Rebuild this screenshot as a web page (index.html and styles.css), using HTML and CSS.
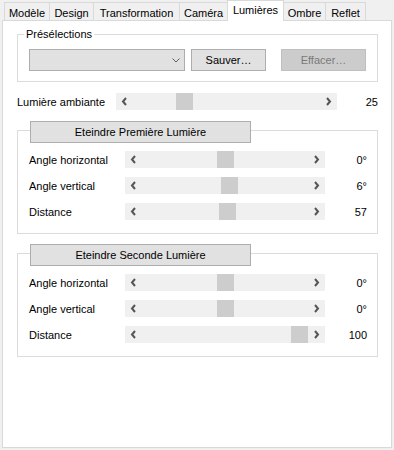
FILE: index.html
```html
<!DOCTYPE html>
<html lang="fr">
<head>
    <meta charset="UTF-8">
    <title>Lumières</title>
    <link rel="stylesheet" href="styles.css">
</head>
<body>
    <div class="window">
        <div class="tabs">
            <div class="tab tab-modele">Modèle</div>
            <div class="tab tab-design">Design</div>
            <div class="tab tab-transfo">Transformation</div>
            <div class="tab tab-camera">Caméra</div>
            <div class="tab tab-lumieres active">Lumières</div>
            <div class="tab tab-ombre">Ombre</div>
            <div class="tab tab-reflet">Reflet</div>
        </div>

        <div class="panel">
            <fieldset class="presets">
                <legend>Présélections</legend>
                <div class="preset-row">
                    <div class="combo">
                        <svg width="8" height="5" viewBox="0 0 8 5"><polyline points="0.5,0.5 4,4 7.5,0.5" fill="none" stroke="#606060" stroke-width="1"/></svg>
                    </div>
                    <button class="btn btn-save">Sauver…</button>
                    <button class="btn btn-clear" disabled>Effacer…</button>
                </div>
            </fieldset>

            <div class="row ambient">
                <span class="label">Lumière ambiante</span>
                <div class="scrollbar">
                    <span class="arrow"><svg width="17" height="17" viewBox="0 0 17 17"><polyline points="10,5 7,8.5 10,12" fill="none" stroke="#555" stroke-width="2"/></svg></span>
                    <div class="track"><div class="thumb" style="--pos: 0.25"></div></div>
                    <span class="arrow"><svg width="17" height="17" viewBox="0 0 17 17"><polyline points="7,5 10,8.5 7,12" fill="none" stroke="#555" stroke-width="2"/></svg></span>
                </div>
                <span class="value">25</span>
            </div>

            <!-- premiere lumiere -->
            <div class="light first">
                <button class="btn btn-toggle">Eteindre Première Lumière</button>
                <div class="row">
                    <span class="label">Angle horizontal</span>
                    <div class="scrollbar">
                        <span class="arrow"><svg width="17" height="17" viewBox="0 0 17 17"><polyline points="10,5 7,8.5 10,12" fill="none" stroke="#555" stroke-width="2"/></svg></span>
                        <div class="track"><div class="thumb" style="--pos: 0.5"></div></div>
                        <span class="arrow"><svg width="17" height="17" viewBox="0 0 17 17"><polyline points="7,5 10,8.5 7,12" fill="none" stroke="#555" stroke-width="2"/></svg></span>
                    </div>
                    <span class="value">0°</span>
                </div>
                <div class="row">
                    <span class="label">Angle vertical</span>
                    <div class="scrollbar">
                        <span class="arrow"><svg width="17" height="17" viewBox="0 0 17 17"><polyline points="10,5 7,8.5 10,12" fill="none" stroke="#555" stroke-width="2"/></svg></span>
                        <div class="track"><div class="thumb" style="--pos: 0.533"></div></div>
                        <span class="arrow"><svg width="17" height="17" viewBox="0 0 17 17"><polyline points="7,5 10,8.5 7,12" fill="none" stroke="#555" stroke-width="2"/></svg></span>
                    </div>
                    <span class="value">6°</span>
                </div>
                <div class="row">
                    <span class="label">Distance</span>
                    <div class="scrollbar">
                        <span class="arrow"><svg width="17" height="17" viewBox="0 0 17 17"><polyline points="10,5 7,8.5 10,12" fill="none" stroke="#555" stroke-width="2"/></svg></span>
                        <div class="track"><div class="thumb" style="--pos: 0.517"></div></div>
                        <span class="arrow"><svg width="17" height="17" viewBox="0 0 17 17"><polyline points="7,5 10,8.5 7,12" fill="none" stroke="#555" stroke-width="2"/></svg></span>
                    </div>
                    <span class="value">57</span>
                </div>
            </div>

            <!-- seconde lumiere -->
            <div class="light second">
                <button class="btn btn-toggle">Eteindre Seconde Lumière</button>
                <div class="row">
                    <span class="label">Angle horizontal</span>
                    <div class="scrollbar">
                        <span class="arrow"><svg width="17" height="17" viewBox="0 0 17 17"><polyline points="10,5 7,8.5 10,12" fill="none" stroke="#555" stroke-width="2"/></svg></span>
                        <div class="track"><div class="thumb" style="--pos: 0.5"></div></div>
                        <span class="arrow"><svg width="17" height="17" viewBox="0 0 17 17"><polyline points="7,5 10,8.5 7,12" fill="none" stroke="#555" stroke-width="2"/></svg></span>
                    </div>
                    <span class="value">0°</span>
                </div>
                <div class="row">
                    <span class="label">Angle vertical</span>
                    <div class="scrollbar">
                        <span class="arrow"><svg width="17" height="17" viewBox="0 0 17 17"><polyline points="10,5 7,8.5 10,12" fill="none" stroke="#555" stroke-width="2"/></svg></span>
                        <div class="track"><div class="thumb" style="--pos: 0.5"></div></div>
                        <span class="arrow"><svg width="17" height="17" viewBox="0 0 17 17"><polyline points="7,5 10,8.5 7,12" fill="none" stroke="#555" stroke-width="2"/></svg></span>
                    </div>
                    <span class="value">0°</span>
                </div>
                <div class="row">
                    <span class="label">Distance</span>
                    <div class="scrollbar">
                        <span class="arrow"><svg width="17" height="17" viewBox="0 0 17 17"><polyline points="10,5 7,8.5 10,12" fill="none" stroke="#555" stroke-width="2"/></svg></span>
                        <div class="track"><div class="thumb" style="--pos: 1"></div></div>
                        <span class="arrow"><svg width="17" height="17" viewBox="0 0 17 17"><polyline points="7,5 10,8.5 7,12" fill="none" stroke="#555" stroke-width="2"/></svg></span>
                    </div>
                    <span class="value">100</span>
                </div>
            </div>
        </div>
    </div>
</body>
</html>
```

FILE: styles.css
```css
* {
    box-sizing: border-box;
}

body {
    margin: 0;
    background-color: #f0f0f0;
    font-family: "Liberation Sans", Arial, sans-serif;
    font-size: 11px;
    color: #000;
}

.window {
    width: 394px;
    height: 450px;
    padding: 0 2px;
}

/* onglets */
.tabs {
    display: flex;
    align-items: flex-end;
    height: 20px;
    padding-left: 2px;
}

.tab {
    height: 18px;
    margin-left: -1px;
    padding-top: 3px;
    border: 1px solid #d9d9d9;
    border-bottom: none;
    background-color: #f0f0f0;
    text-align: center;
    line-height: 14px;
    white-space: nowrap;
}

.tab:first-child {
    margin-left: 0;
}

.tab.active {
    height: 21px;
    margin-bottom: -1px;
    padding-top: 2px;
    background-color: #fff;
    position: relative;
    z-index: 1;
}

.tab-modele { width: 46px; }
.tab-design { width: 45px; }
.tab-transfo { width: 87px; }
.tab-camera { width: 49px; }
.tab-lumieres { width: 57px; }
.tab-ombre { width: 43px; }
.tab-reflet { width: 41px; }

.panel {
    height: 428px;
    border: 1px solid #d9d9d9;
    background-color: #fff;
    padding: 6px 13px 0 14px;
}

/* groupes */
.presets {
    margin: 0;
    min-width: 0;
    border: 1px solid #dcdcdc;
    padding: 8px 11px 10px 11px;
}

.presets legend {
    margin-left: -5px;
    padding: 0 2px;
    line-height: 14px;
}

.preset-row {
    display: flex;
    align-items: center;
}

.combo {
    width: 156px;
    height: 22px;
    display: flex;
    align-items: center;
    justify-content: flex-end;
    padding-right: 4px;
    background-color: #e1e1e1;
    border: 1px solid #adadad;
}

.btn {
    height: 22px;
    padding: 0;
    font-family: inherit;
    font-size: 11px;
    color: #000;
    background-color: #e1e1e1;
    border: 1px solid #adadad;
    border-radius: 0;
}

.btn-save {
    width: 75px;
    margin-left: 6px;
}

.btn-clear {
    width: 85px;
    margin-left: 15px;
    background-color: #cccccc;
    border-color: #bfbfbf;
    color: #7a7a7a;
}

/* le bouton se pose sur la bordure du haut */
.light {
    margin-top: 20px;
    padding: 0 10px 13px 11px;
    border: 1px solid #dcdcdc;
}

.light.second {
    margin-top: 19px;
}

.btn-toggle {
    display: block;
    width: 221px;
    margin: -10px 0 8px 1px;
}

/* lignes avec barre de defilement */
.row {
    display: flex;
    align-items: center;
    height: 17px;
}

.row + .row {
    margin-top: 9px;
}

.label {
    width: 96px;
    white-space: nowrap;
}

.value {
    flex: 1;
    text-align: right;
}

.ambient {
    margin-top: 11px;
}

.ambient .label {
    width: 99px;
}

.scrollbar {
    display: flex;
    width: 200px;
    height: 17px;
    background-color: #f0f0f0;
}

.ambient .scrollbar {
    width: 221px;
}

.arrow {
    width: 17px;
    height: 17px;
    flex-shrink: 0;
}

.arrow svg {
    display: block;
}

.track {
    flex: 1;
}

.thumb {
    width: 17px;
    height: 100%;
    background-color: #cdcdcd;
    margin-left: calc((100% - 17px) * var(--pos));
}
```
